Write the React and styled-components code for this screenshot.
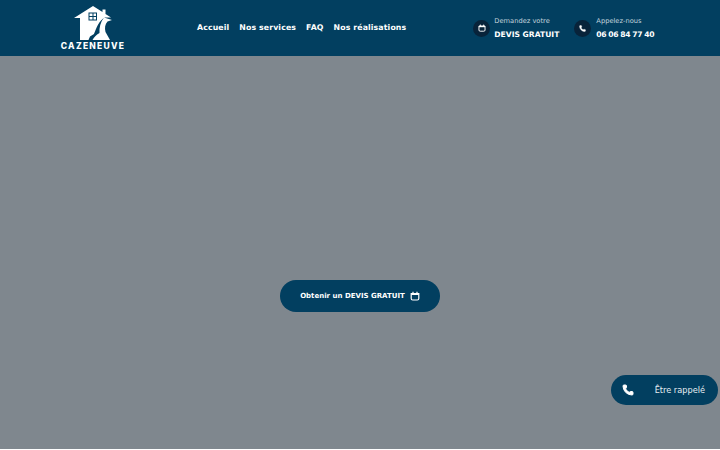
import React from "react";
import styled, { createGlobalStyle } from "styled-components";
import { Phone } from "lucide-react";

const Global = createGlobalStyle`
  html, body { margin: 0; padding: 0; background: #fff; }
  body { font-family: "DejaVu Sans", "Liberation Sans", sans-serif; }
`;

const Page = styled.div`
  position: relative;
  width: 720px;
  height: 449px;
  background: #7f878e;
  overflow: hidden;
  display: flex;
  flex-direction: column;
`;

const Header = styled.header`
  height: 56px;
  background: #023f60;
  display: flex;
  align-items: center;
  padding-left: 60px;
  flex: none;
`;

const Logo = styled.div`
  width: 66px;
  display: flex;
  flex-direction: column;
  align-items: center;
  gap: 1px;
`;

const LogoName = styled.span`
  font: 800 8.5px "Inter", sans-serif;
  letter-spacing: 1.25px;
  color: #fff;
  line-height: 9px;
  white-space: nowrap;
`;

const Nav = styled.nav`
  display: flex;
  gap: 10px;
  margin-left: 71px;
  margin-bottom: 1px;
`;

const NavLink = styled.a`
  font: 700 7.8px "DejaVu Sans", sans-serif;
  letter-spacing: 0.12px;
  color: #fff;
  white-space: nowrap;
`;

const Contact = styled.div`
  display: flex;
  align-items: center;
  gap: ${(p) => p.$inner}px;
  margin-left: ${(p) => p.$gap}px;
`;

const Badge = styled.span`
  width: 17px;
  height: 17px;
  border-radius: 50%;
  background: #08233a;
  display: flex;
  align-items: center;
  justify-content: center;
  color: #fff;
`;

const ContactText = styled.div`
  display: flex;
  flex-direction: column;
  gap: 4px;
`;

const Small = styled.span`
  font: 400 6.7px "DejaVu Sans", sans-serif;
  color: #c3d4dd;
  line-height: 9px;
  white-space: nowrap;
`;

const Strong = styled.span`
  font: 700 7.6px "DejaVu Sans", sans-serif;
  letter-spacing: ${(p) => p.$spacing || 0}px;
  color: #fff;
  line-height: 9px;
  white-space: nowrap;
`;

const Hero = styled.main`
  flex: 1;
  display: flex;
  justify-content: center;
  padding-top: 224px;
`;

const Cta = styled.a`
  width: 160px;
  height: 32px;
  border-radius: 16px;
  background: #023f60;
  display: flex;
  align-items: center;
  justify-content: center;
  gap: 5px;
  font: 700 7px "DejaVu Sans", sans-serif;
  color: #fff;
`;

const Callback = styled.a`
  position: absolute;
  left: 611px;
  top: 375px;
  width: 107px;
  height: 30px;
  border-radius: 15px;
  background: #023f60;
  display: flex;
  align-items: center;
  justify-content: space-between;
  padding: 0 13px 0 11px;
  box-sizing: border-box;
  font: 400 8.2px "DejaVu Sans", sans-serif;
  color: #e6eef2;
`;

const CalendarIcon = ({ size = 9 }) => (
  <svg width={size} height={size} viewBox="0 0 10 10" fill="none" stroke="#fff" strokeWidth="1.2">
    <path d="M1.2 2.5h7.6v5a1.5 1.5 0 0 1-1.5 1.5H2.7a1.5 1.5 0 0 1-1.5-1.5z" />
    <path d="M1.2 3.2h7.6" strokeWidth="1.6" />
    <path d="M3 .8v1.6M7 .8v1.6" />
  </svg>
);

const HouseLogo = () => (
  <svg width="40" height="36" viewBox="73 5 40 36">
    <path
      fill="#fff"
      d="M93 6 102.500 12V9.500H105.500V14L111 17.500H105C99 20 96 29 94 34L90 36.500 88.500 40H80V18H74z"
    />
    <path fill="#fff" d="M104 17.500 112 20 107.500 21.500C105 24 104.500 28 105.500 32L110 40H92.500C94 37 96 35 99.500 33C99 28 100.500 22 104 17.500z" />
    <path fill="#023f60" d="M88.500 12.500h8.500v8h-8.500z" />
    <path fill="#fff" d="M89.500 13.500h3v2.500h-3zM93.500 13.500h2.500v2.500h-2.500zM89.500 17h3v2.500h-3zM93.500 17h2.500v2.500h-2.500z" />
  </svg>
);

export default function App() {
  return (
    <Page>
      <Global />
      <Header>
        <Logo>
          <HouseLogo />
          <LogoName>CAZENEUVE</LogoName>
        </Logo>
        <Nav>
          <NavLink>Accueil</NavLink>
          <NavLink>Nos services</NavLink>
          <NavLink>FAQ</NavLink>
          <NavLink>Nos réalisations</NavLink>
        </Nav>
        <Contact $gap={67} $inner={4}>
          <Badge><CalendarIcon size={8} /></Badge>
          <ContactText>
            <Small>Demandez votre</Small>
            <Strong>DEVIS GRATUIT</Strong>
          </ContactText>
        </Contact>
        <Contact $gap={15} $inner={5}>
          <Badge><Phone size={7} fill="#fff" strokeWidth={1.5} /></Badge>
          <ContactText>
            <Small>Appelez-nous</Small>
            <Strong $spacing={-0.4}>06 06 84 77 40</Strong>
          </ContactText>
        </Contact>
      </Header>
      <Hero>
        <Cta>
          Obtenir un DEVIS GRATUIT <CalendarIcon size={10} />
        </Cta>
      </Hero>
      <Callback>
        <Phone size={12} fill="#fff" color="#fff" />
        Être rappelé
      </Callback>
    </Page>
  );
}
